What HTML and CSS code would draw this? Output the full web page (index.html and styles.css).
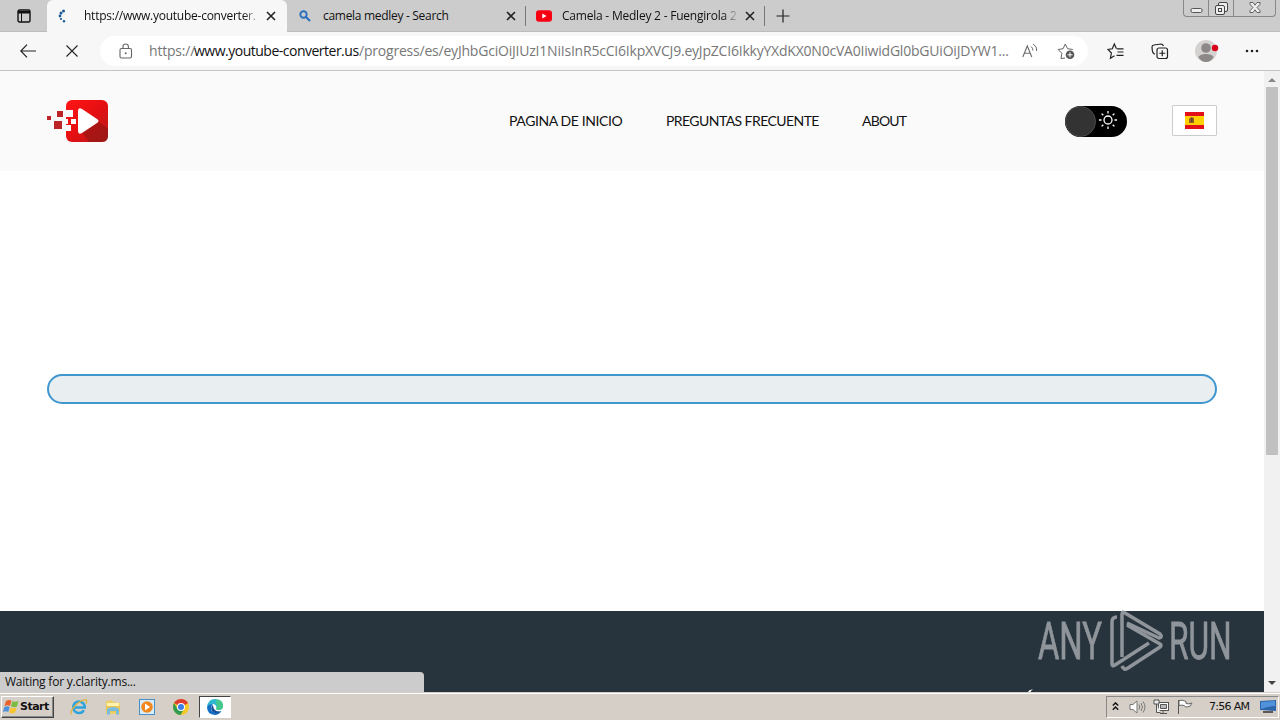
FILE: index.html
```html
<!DOCTYPE html>
<html lang="es">
  <head>
    <meta charset="utf-8">
    <title>youtube-converter</title>
    <link rel="stylesheet" href="styles.css">
  </head>
  <body>

    <!-- tabs -->
    <div class="tabs">
      <div class="tab-menu">
        <svg width="14" height="14" viewBox="0 0 14 14"><rect x="1" y="1" width="12" height="12" rx="1.5" fill="none" stroke="#111" stroke-width="1.4"/><path d="M1 2h12v2.5H1z" fill="#111"/><path d="M4.5 4v9" stroke="#111"/></svg>
      </div>
      <div class="tab active">
        <svg class="fav" width="16" height="16" viewBox="0 0 16 16" fill="#1c5a94"><circle cx="7.5" cy="3" r="1.5"/><circle cx="5" cy="5" r="1.5"/><circle cx="4" cy="8" r="1.4"/><circle cx="5" cy="11" r="1.1"/><circle cx="8" cy="13.3" r="1.2"/></svg>
        <span class="tab-title t1">https://www.youtube-converter.</span>
        <svg class="x" width="10" height="10" viewBox="0 0 10 10"><path d="M1 1l8 8M9 1l-8 8"/></svg>
      </div>
      <div class="tab">
        <svg class="fav" width="16" height="16" viewBox="0 0 16 16" fill="none" stroke="#2b70bd"><circle cx="6.5" cy="6.500" r="3.2" stroke-width="1.9"/><path d="M9 9l4 4" stroke-width="2.2"/></svg>
        <span class="tab-title t2">camela medley - Search</span>
        <svg class="x" width="10" height="10" viewBox="0 0 10 10"><path d="M1 1l8 8M9 1l-8 8"/></svg>
      </div>
      <div class="tab">
        <svg class="fav" width="16" height="16" viewBox="0 0 16 16"><rect y="2.3" width="16" height="11.4" rx="3" fill="#f80012"/><path d="M6.3 5.6v4.8L10.5 8z" fill="#fff"/></svg>
        <span class="tab-title t3">Camela - Medley 2 - Fuengirola 2</span>
        <svg class="x" width="10" height="10" viewBox="0 0 10 10"><path d="M1 1l8 8M9 1l-8 8"/></svg>
      </div>
      <svg class="plus" width="14" height="14" viewBox="0 0 14 14"><path d="M7 .5v13M.5 7h13" stroke="#222" stroke-width="1.2"/></svg>
      <div class="win-buttons">
        <div class="wb"><svg width="13" height="12" viewBox="0 0 13 12"><rect x="1" y="6.5" width="11" height="4" rx="1.5" fill="#eee" stroke="#555"/></svg></div>
        <div class="wb"><svg width="13" height="13" viewBox="0 0 13 13" fill="#eee" stroke="#444"><rect x="3.5" y=".5" width="9" height="9" rx="1.5"/><rect x=".5" y="3.5" width="9" height="9" rx="1.5"/><rect x="3.5" y="6.5" width="3" height="3"/></svg></div>
        <div class="wb close"><svg width="12" height="11" viewBox="0 0 12 11"><path d="M1 .5h3l2 2.7L8 .5h3v1.8L8 5.5l3 3.2v1.8H8L6 7.8l-2 2.7H1V8.7l3-3.2L1 2.3z" fill="#eee" stroke="#555" stroke-width=".9"/></svg></div>
      </div>
    </div>

    <!-- address bar -->
    <div class="toolbar">
      <svg class="back" width="16" height="14" viewBox="0 0 16 14"><path d="M7 .7L.8 7 7 13.3M1 7h15" fill="none" stroke="#222" stroke-width="1.2"/></svg>
      <svg class="stop" width="12" height="12" viewBox="0 0 12 12"><path d="M.5.5l11 11M11.5.5l-11 11" stroke="#222" stroke-width="1.1"/></svg>
      <div class="address">
        <svg class="lock" width="14" height="16" viewBox="0 0 14 16"><rect x="1" y="5.5" width="11.5" height="9.5" rx="1.5" fill="none" stroke="#666" stroke-width="1.1"/><path d="M4 5.5V3.700a2.700 2.700 0 0 1 5.400 0v1.800" fill="none" stroke="#666" stroke-width="1.1"/><circle cx="6.7" cy="10.2" r="1" fill="#666"/></svg>
        <div class="url"><span class="u1">https://</span><span class="u2">www.youtube-converter.us</span><span class="u3">/progress/es/eyJhbGciOiJIUzI1NiIsInR5cCI6IkpXVCJ9.eyJpZCI6IkkyYXdKX0N0cVA0IiwidGl0bGUiOiJDYW1...</span></div>
        <svg class="read" width="16" height="16" viewBox="0 0 16 16" fill="none" stroke="#6b6b6b"><path d="M.8 14L5.300 3l4.500 11M2.400 10.300h5.800" stroke-width="1.1"/><path d="M9 3.500q2.200 1.500 1.800 4M11 1q4.500 2.500 3.700 7" stroke-width="1"/></svg>
        <svg class="fav-add" width="18" height="18" viewBox="0 0 18 18"><path d="M8 16l-4 .6.8-5.300L1.200 7.500l4.900-.8L8.300 2l2.300 4.700 5.200.8" fill="none" stroke="#666"/><circle cx="13" cy="12.8" r="4.3" fill="#555"/><path d="M13 10.300v5M10.500 12.800h5" stroke="#fff"/></svg>
      </div>
      <svg class="favs" width="18" height="18" viewBox="0 0 18 18" fill="none" stroke="#222" stroke-width="1.2"><path d="M9.500 6.800L7.300 2 5.300 6.800 1 7.400l3.400 3.600-1 5.200 4.100-2.400"/><path d="M10 6.800h6.500M10.500 10h6M9.500 13.300h7"/></svg>
      <svg class="coll" width="18" height="18" viewBox="0 0 18 18" fill="none" stroke="#222" stroke-width="1.2"><path d="M4 12.300L3 11.800Q1.500 10.500 1.300 8.500L1 5Q1 3.300 3 3l7-1q1.800 0 2.400 2"/><rect x="6" y="6" width="10.5" height="10.5" rx="2"/><path d="M11.250 8.300v6M8.300 11.250h6"/></svg>
      <svg class="avatar" width="24" height="24" viewBox="0 0 24 24"><circle cx="11" cy="12" r="11" fill="#d4d2d0"/><circle cx="11" cy="9" r="4.8" fill="#8c8888"/><path d="M3.300 18q2-3 7.700-3t7.700 3q-3 5-7.700 5t-7.700-5z" fill="#8c8888"/><circle cx="20" cy="9" r="3.2" fill="#d9001b"/></svg>
      <svg class="dots" width="14" height="4" viewBox="0 0 14 4" fill="#222"><circle cx="2" cy="2" r="1.3"/><circle cx="7" cy="2" r="1.3"/><circle cx="12" cy="2" r="1.3"/></svg>
    </div>

    <div class="viewport">
      <div class="page">
        <header class="header">
          <svg class="logo" width="62" height="44" viewBox="0 0 62 44">
            <defs>
              <linearGradient id="red" x1="0" y1="0" x2="1" y2="1"><stop offset="0" stop-color="#ff1515"/><stop offset=".5" stop-color="#e50f12"/><stop offset="1" stop-color="#b51a1b"/></linearGradient>
            </defs>
            <rect x="19" y="1" width="42" height="42" rx="6" fill="url(#red)"/>
            <path d="M35 33l16-11 10 8v7q0 6-6 6H42z" fill="#8e1813" opacity=".6"/>
            <path d="M31 12q0-4 4-2l15 10q3 2 0 4L35 34q-4 2-4-2z" fill="#fff"/>
            <path d="M19 11h7v7h-7zM19 26h5v6h-5zM24 20h5v5h-5z" fill="#fafafa"/>
            <path d="M18 20h3v5h-3z" fill="#fafafa"/>
            <path d="M0 17h4v4H0zM10 12h6v6h-6zM7 22h8v8H7z" fill="#bd2427"/>
          </svg>
          <nav class="nav">
            <a class="n1">PAGINA DE INICIO</a>
            <a class="n2">PREGUNTAS FRECUENTE</a>
            <a class="n3">ABOUT</a>
          </nav>
          <div class="toggle">
            <div class="knob"></div>
            <svg width="18" height="18" viewBox="0 0 18 18" fill="none" stroke="#fff" stroke-width="1.3"><circle cx="9" cy="9" r="4"/><path d="M9 0v2.500M9 15.500V18M0 9h2.500M15.500 9H18M2.600 2.600l1.700 1.700M13.700 13.700l1.700 1.700M2.600 15.400l1.700-1.700M13.700 4.300l1.700-1.700"/></svg>
          </div>
          <div class="lang">
            <svg width="19" height="17" viewBox="0 0 19 17"><path d="M0 0h19v17H0z" fill="#e3101a"/><path d="M0 4h19v9H0z" fill="#ffd000"/><path d="M4 7l2-2 3 1v5H4z" fill="#9a5b25"/><path d="M6 6h1.500v4H6z" fill="#59462a"/></svg>
          </div>
        </header>
        <main class="main">
          <div class="progress"></div>
        </main>
        <footer class="footer">
          <div class="watermark">
            <span class="wm any">ANY</span>
            <svg width="56" height="62" viewBox="0 0 56 62" fill="none" stroke="#8f959a" stroke-width="3.5"><path d="M8 7Q3 7 3 12v42q0 3 3 1l34-22"/><path d="M13 47V4q0-3 3-1l35 21q3 3-1 4L18 13"/><path d="M18 15l33 19q2 1.500 0 3L19 58q-4 3-6-2"/></svg>
            <span class="wm run">RUN</span>
          </div>
          <div class="status">Waiting for y.clarity.ms...</div>
          <svg class="curl" width="6" height="3" viewBox="0 0 6 3"><path d="M0 3q1-3 5-2.500Q3 1 2.500 3z" fill="#fff"/></svg>
        </footer>
      </div>
      <div class="scrollbar">
        <svg width="8" height="4" viewBox="0 0 8 4"><path d="M0 4l4-4 4 4z" fill="#888"/></svg>
        <div class="thumb"></div>
        <svg class="down" width="8" height="4" viewBox="0 0 8 4"><path d="M0 0l4 4 4-4z" fill="#444"/></svg>
      </div>
    </div>

    <!-- windows taskbar -->
    <div class="taskbar">
      <div class="start">
        <svg width="17" height="16" viewBox="0 0 17 16"><path d="M3 2q3-2 5.500-.3L7 7Q4.500 5.500 1.500 7z" fill="#e8622c"/><path d="M9.500 2q2.500 1.500 6 0L14 7.500q-3 1.500-6 0z" fill="#7dbb42"/><path d="M1.300 8q3-1.500 5.400 0l-1.500 5Q3 11.500 0 13z" fill="#4c91d9"/><path d="M7.700 8.500q3 1.500 6 0l-1.500 5q-3 1.700-6 0z" fill="#f8c530"/></svg>
        <b>Start</b>
      </div>
      <svg class="ie" width="18" height="18" viewBox="0 0 18 18" fill="none"><path d="M13.800 12.200Q12.500 15 9 15a5.800 5.800 0 1 1 5.800-5.500H4" stroke="#2ca3dd" stroke-width="2.5"/><path d="M1.500 16.300Q-.5 14 5 8T16 1.700q1.500 1 0 4" stroke="#dfb343" stroke-width="1.3"/></svg>
      <svg class="folder" width="18" height="18" viewBox="0 0 18 18"><path d="M2 3l6-1 1 2 7 1v11H2z" fill="#efcf69"/><path d="M3 5h12v5H3z" fill="#fff3ad"/><path d="M2 8h14v6H2z" fill="#e9c656"/><path d="M3 16.500V11q6-4 12 0v5.500h-3V13H6v3.500z" fill="#78bce0"/></svg>
      <svg class="wmp" width="18" height="18" viewBox="0 0 18 18"><rect x="1.5" y="1.5" width="15" height="15" fill="#d8edf9" stroke="#4990c6"/><circle cx="9" cy="9" r="5.8" fill="#f2871e"/><path d="M7 5.500v7l5-3.500z" fill="#fff"/></svg>
      <svg class="chrome" width="16" height="16" viewBox="0 0 16 16"><circle cx="8" cy="8" r="8" fill="#f7c928"/><path d="M8 8L1.100 4A8 8 0 0 1 15 4.200z" fill="#df3d32"/><path d="M1.100 4A8 8 0 0 0 7.500 16L11 10H4.500z" fill="#329b50"/><circle cx="8" cy="8" r="4" fill="#fff"/><circle cx="8" cy="8" r="3" fill="#3c7ee8"/></svg>
      <div class="edge-button">
        <svg width="18" height="18" viewBox="0 0 18 18"><path d="M1 9Q2 1 9 1q8 .5 8 7 0 4-4.500 4-3 0-2-2.500Q10 6 6.500 6 3 6 1 9z" fill="#31b8d0"/><path d="M11 1.300q6 1.200 6 6.700 0 4-4.500 4-3 0-2-2.500 1.500-3-1-5z" fill="#46c78b"/><path d="M1 9q2-4 6-2.500-3 2-1.500 6Q8 16 15.500 13 13 17 9 17 1 16.500 1 9z" fill="#126fc4"/><path d="M7 7Q4 9 6 13q3 4 9 .5-5 .5-7-2.500-1-2-1-4z" fill="#164f96"/></svg>
      </div>
      <div class="tray">
        <svg width="7" height="9" viewBox="0 0 7 9"><path d="M.8 3.600l2.700-2.700 2.700 2.700M.8 7.800l2.700-2.700 2.700 2.700" fill="none" stroke="#111" stroke-width="1.4"/></svg>
        <svg class="volume" width="17" height="14" viewBox="0 0 17 14" fill="#fff" stroke="#777"><path d="M1 4.500h3L8 1v12L4 9.500H1z"/><path d="M10 4.500q1.500 2.500 0 5M12 3q3 4 0 8M14 1.500q4 5.500 0 11" fill="none"/></svg>
        <svg class="network" width="16" height="15" viewBox="0 0 16 15" fill="#fff" stroke="#555"><rect x="5.5" y="3.5" width="10" height="8"/><path d="M7.500 5.500h6v4h-6z" fill="#bbb"/><path d="M7 14.500h7M10 12v2"/><path d="M1 1h5v4H1zM3.500 5v8.500h4" fill="#eee"/></svg>
        <svg class="flag" width="17" height="15" viewBox="0 0 17 15"><path d="M1.500 1v14" stroke="#555"/><path d="M2 1.500q4-1 7 1v2q3 1 6-.5-1 4-5 4-2 0-3-1.500-2-.8-5 0z" fill="#fff" stroke="#666"/></svg>
        <span class="clock">7:56 AM</span>
        <svg class="desktop" width="16" height="13" viewBox="0 0 16 13"><path d="M0 1l16-1v11L0 10z" fill="#2d65ab"/><path d="M1 2l14-1v5q-7 0-14 3z" fill="#4f91db"/><path d="M3 12h10" stroke="#333" stroke-width="1.5"/></svg>
      </div>
    </div>

  </body>
</html>
```
FILE: styles.css
```css
* {
  box-sizing: border-box;
}
body {
  margin: 0;
  width: 1280px;
  height: 720px;
  overflow: hidden;
  display: flex;
  flex-direction: column;
  font-family: "Open Sans", "Noto Sans", sans-serif;
  font-size: 12px;
  color: #111;
}
svg {
  display: block;
  flex: none;
}

/* tabs */
.tabs {
  height: 32px;
  display: flex;
  background: #cccccc;
  border-bottom: 1px solid #bdbdbd;
}
.tab-menu {
  width: 47px;
  padding: 9px 0 0 17px;
}
.tab {
  width: 239px;
  height: 31px;
  display: flex;
  align-items: center;
  padding: 0 10px 0 10px;
  background: linear-gradient(#777, #777) right 6px / 1px 20px no-repeat;
}
.tab.active {
  width: 240px;
  height: 32px;
  padding: 0 11px 1px 9px;
  background: #f7f7f7;
  border-radius: 6px 6px 0 0;
}
.tab-title {
  width: 177px;
  margin-left: 10px;
  white-space: nowrap;
}
.active .tab-title {
  margin-left: 12px;
}
.t1 {
  letter-spacing: -0.25px;
  -webkit-mask-image: linear-gradient(90deg, #000 90%, transparent);
}
.t2 {
  letter-spacing: -0.3px;
}
.t3 {
  letter-spacing: -0.22px;
  -webkit-mask-image: linear-gradient(90deg, #000 91%, transparent);
}
.x {
  margin-left: auto;
}
.x path {
  stroke: #222;
  stroke-width: 1.6;
}
.plus {
  margin: 9px 0 0 11px;
}
.win-buttons {
  display: flex;
  width: 93px;
  height: 17px;
  margin: 0 4px 0 auto;
  border: 1px solid #888;
  border-top: 0;
  border-radius: 0 0 4px 4px;
}
.wb {
  width: 25px;
  display: flex;
  justify-content: center;
  padding-top: 2px;
  border-right: 1px solid #888;
}
.wb.close {
  width: 41px;
  border: 0;
}

/* address bar */
.toolbar {
  height: 39px;
  display: flex;
  align-items: center;
  background: #f7f7f7;
  border-bottom: 1px solid #c4c4c4;
}
.back {
  margin-left: 20px;
}
.stop {
  margin-left: 30px;
}
.address {
  width: 988px;
  height: 30px;
  margin-left: 22px;
  padding-left: 19px;
  display: flex;
  align-items: center;
  background: #fff;
  border-radius: 15px;
}
.url {
  display: flex;
  width: 862px;
  margin: 0 0 1px 16px;
  font-size: 14px;
  color: #777;
  white-space: nowrap;
}
.u1 {
  width: 45px;
  letter-spacing: -0.2px;
}
.u2 {
  width: 165px;
  letter-spacing: -0.5px;
  color: #111;
}
.u3 {
  letter-spacing: -0.21px;
}
.read {
  margin-left: 11px;
}
.fav-add {
  margin-left: 19px;
}
.favs {
  margin-left: 19px;
}
.coll {
  margin-left: 26px;
}
.avatar {
  margin-left: 26px;
}
.dots {
  margin-left: 26px;
}

/* page */
.viewport {
  height: 621px;
  display: flex;
}
.page {
  width: 1264px;
  display: flex;
  flex-direction: column;
}
.header {
  height: 100px;
  display: flex;
  align-items: center;
  padding: 0 47px;
  background: #fafafa;
}
.nav {
  display: flex;
  margin: 0 0 2px 400px;
  font-family: Lato, sans-serif;
  font-size: 14px;
}
.n1 {
  width: 157px;
  letter-spacing: -0.4px;
}
.n2 {
  width: 196px;
  letter-spacing: -0.56px;
}
.n3 {
  width: 45px;
  letter-spacing: -0.8px;
}
.toggle {
  width: 62px;
  height: 31px;
  margin-left: auto;
  display: flex;
  align-items: center;
  background: #000;
  border-radius: 16px;
}
.toggle svg {
  margin: -2px 0 0 3px;
}
.knob {
  width: 31px;
  height: 31px;
  background: #333;
  border: 1px solid #4c4c4c;
  border-radius: 50%;
}
.lang {
  width: 45px;
  height: 31px;
  margin: 0 0 2px 45px;
  display: flex;
  align-items: center;
  justify-content: center;
  background: #fff;
  border: 1px solid #ccc;
  border-radius: 1px;
}
.main {
  height: 440px;
  padding: 202.5px 47px 0;
  background: #fff;
}
.progress {
  height: 30px;
  background: #e9eef0;
  border: 2px solid #3f97ce;
  border-radius: 15px;
}
.footer {
  position: relative;
  height: 81px;
  background: #27333d;
}
.watermark {
  position: absolute;
  left: 1038px;
  top: -1px;
  display: flex;
  color: #8f959a;
}
.wm {
  width: 63px;
  height: 62px;
  font-family: Roboto, sans-serif;
  font-size: 52px;
  line-height: 64px;
  transform-origin: left;
  -webkit-text-stroke: 0.8px #8f959a;
}
.any {
  transform: scaleX(.63);
}
.watermark svg {
  margin-left: 8px;
}
.run {
  margin-left: 4px;
  transform: scaleX(.61);
}
.status {
  position: absolute;
  left: 0;
  bottom: 0;
  width: 424px;
  height: 20px;
  padding-left: 5px;
  line-height: 20px;
  letter-spacing: -0.22px;
  background: #cccccc;
  border-radius: 0 4px 0 0;
}
.curl {
  position: absolute;
  left: 1028px;
  bottom: 0;
}
.scrollbar {
  width: 16px;
  display: flex;
  flex-direction: column;
  align-items: center;
  padding: 7px 0;
  background: #f1f1f1;
}
.thumb {
  width: 12px;
  height: 368px;
  margin-top: 5px;
  background: #c1c1c1;
}
.down {
  margin-top: auto;
}

/* taskbar */
.taskbar {
  height: 28px;
  display: flex;
  align-items: center;
  background: #d6cfc7;
  border-top: 1px solid #d6cfc7;
  box-shadow: inset 0 1px #fff;
  font-family: "DejaVu Sans", sans-serif;
  font-size: 11px;
}
.start {
  width: 53px;
  height: 22px;
  margin-left: 1px;
  padding-left: 1px;
  display: flex;
  align-items: center;
  border: 1px solid;
  border-color: #fff #444 #444 #fff;
  box-shadow: inset -1px -1px #888;
}
.start b {
  letter-spacing: -0.5px;
}
.ie {
  margin-left: 16px;
}
.folder {
  margin-left: 16px;
}
.wmp {
  margin-left: 16px;
}
.chrome {
  margin-left: 17px;
}
.edge-button {
  width: 32px;
  height: 22px;
  margin-left: 10px;
  display: flex;
  align-items: center;
  justify-content: center;
  background: #fff;
  border: 1px solid;
  border-color: #444 #fff #fff #444;
}
.tray {
  width: 173px;
  height: 22px;
  margin: 0 1px 0 auto;
  padding-left: 5px;
  display: flex;
  align-items: center;
  border: 1px solid;
  border-color: #888 #fff #fff #888;
}
.volume {
  margin-left: 10px;
}
.network {
  margin-left: 7px;
}
.flag {
  margin-left: 8px;
}
.clock {
  width: 41px;
  margin-left: 15px;
  letter-spacing: -0.7px;
  white-space: nowrap;
}
.desktop {
  margin-left: 10px;
}
```
